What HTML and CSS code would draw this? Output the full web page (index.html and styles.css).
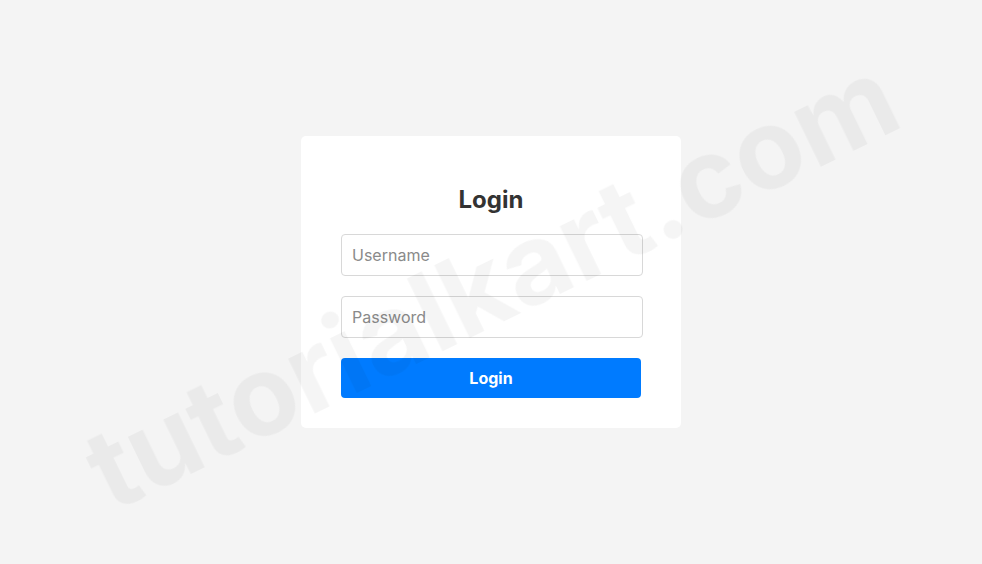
FILE: index.html
```html
<!DOCTYPE html>
<html lang="en">
<head>
<meta charset="utf-8">
<title>Login</title>
<link rel="stylesheet" href="styles.css">
</head>
<body>
<main class="page">
  <form class="card">
    <h2 class="title">Login</h2>
    <input class="field" type="text" placeholder="Username">
    <input class="field" type="password" placeholder="Password">
    <button class="btn" type="button">Login</button>
  </form>
</main>
<div class="watermark">tutorialkart.com</div>
</body>
</html>
```

FILE: styles.css
```css
html, body {
  margin: 0;
  padding: 0;
  height: 100%;
}
body {
  background: #f4f4f4;
  font-family: Inter, "Liberation Sans", sans-serif;
  overflow: hidden;
}
.page {
  min-height: 100vh;
  display: flex;
  align-items: center;
  justify-content: center;
}
.card {
  width: 300px;
  padding: 30px 40px;
  background: #fff;
  border-radius: 5px;
  display: flex;
  flex-direction: column;
  align-items: flex-start;
  gap: 20px;
}
.title {
  align-self: stretch;
  margin: 20px 0 0;
  font-size: 24px;
  line-height: 28px;
  font-weight: 700;
  color: #333;
  text-align: center;
}
.field {
  box-sizing: border-box;
  width: 302px;
  height: 42px;
  margin: 0;
  padding: 10px;
  border: 1px solid #d8d8d8;
  border-radius: 4px;
  font-family: inherit;
  font-size: 16px;
  color: #333;
  background: #fff;
  outline: none;
}
.field::placeholder {
  color: #8a8a8a;
}
.btn {
  width: 300px;
  height: 40px;
  margin: 0;
  border: none;
  border-radius: 4px;
  background: #007bff;
  color: #fff;
  font-family: inherit;
  font-size: 16px;
  font-weight: 700;
  cursor: pointer;
}
.watermark {
  position: fixed;
  top: 50%;
  left: 50%;
  transform: translate(-50%, -50%) rotate(-26deg);
  font-size: 112px;
  font-weight: 700;
  color: rgba(0, 0, 0, 0.04);
  white-space: nowrap;
  pointer-events: none;
  user-select: none;
}
```
